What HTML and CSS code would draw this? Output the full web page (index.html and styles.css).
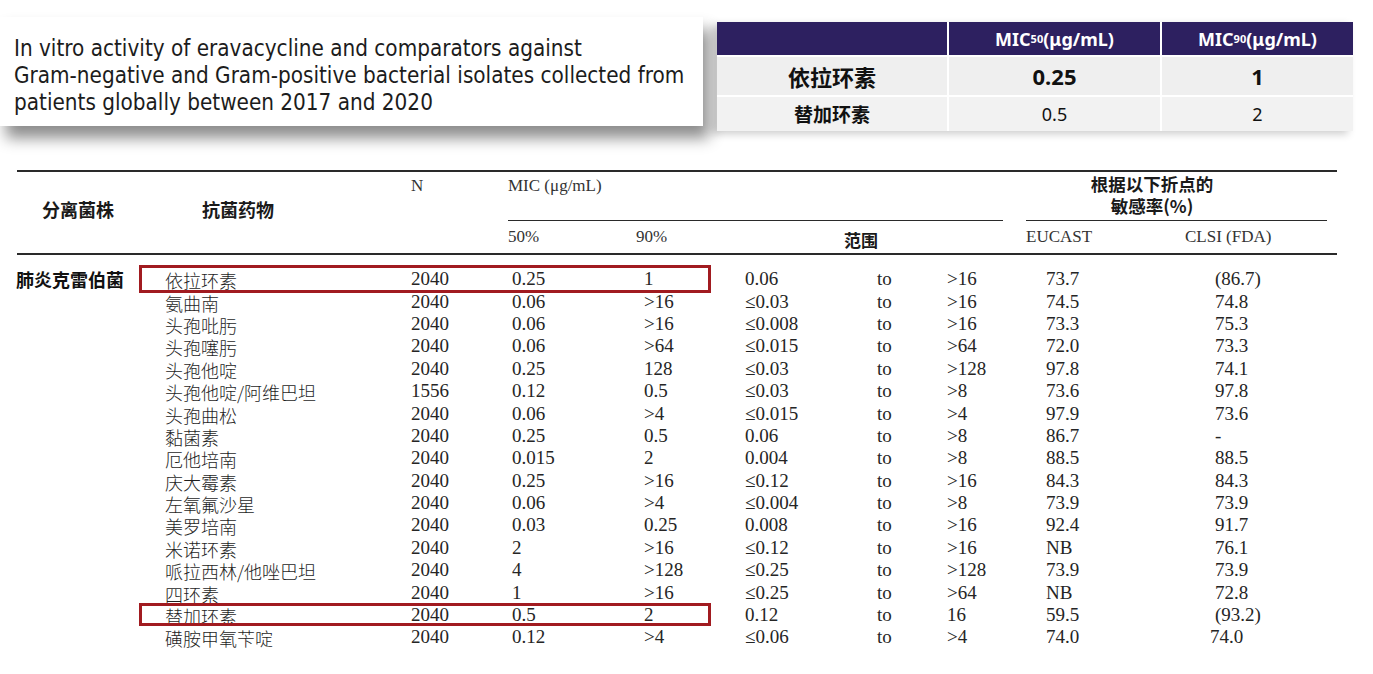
FILE: index.html
```html
<!DOCTYPE html>
<html lang="zh-CN">
<head>
<meta charset="utf-8">
<title>Eravacycline MIC</title>
<link rel="stylesheet" href="styles.css">
</head>
<body>
<div class="top">
  <div class="card">
    <p class="card-text">In vitro activity of eravacycline and comparators against<br>Gram-negative and Gram-positive bacterial isolates collected from<br>patients globally between 2017 and 2020</p>
  </div>
  <div class="summary">
    <div class="s-head"></div>
    <div class="s-head">MIC<sub>50</sub> (μg/mL)</div>
    <div class="s-head">MIC<sub>90</sub>(μg/mL)</div>
    <div class="s-cell s-big s-name">依拉环素</div>
    <div class="s-cell s-big">0.25</div>
    <div class="s-cell s-big">1</div>
    <div class="s-cell s-small s-name">替加环素</div>
    <div class="s-cell s-small">0.5</div>
    <div class="s-cell s-small">2</div>
  </div>
</div>

<div class="main">
  <div class="thead">
    <div class="h-org">分离菌株</div>
    <div class="h-drug">抗菌药物</div>
    <div class="h-n">N</div>
    <div class="h-mic">MIC (μg/mL)</div>
    <div class="h-sens"><div>根据以下折点的</div><div>敏感率(%)</div></div>
    <div class="h-50">50%</div>
    <div class="h-90">90%</div>
    <div class="h-range">范围</div>
    <div class="h-eu">EUCAST</div>
    <div class="h-clsi">CLSI (FDA)</div>
  </div>
  <div class="tbody">
    <div class="row"><span class="org">肺炎克雷伯菌</span><span class="drug">依拉环素</span><span>2040</span><span class="c50">0.25</span><span class="c90">1</span><span>0.06</span><span>to</span><span>&gt;16</span><span class="eu">73.7</span><span class="cl">(86.7)</span><i class="mark mark-a"></i></div>
    <div class="row"><span class="org"></span><span class="drug">氨曲南</span><span>2040</span><span class="c50">0.06</span><span class="c90">&gt;16</span><span>≤0.03</span><span>to</span><span>&gt;16</span><span class="eu">74.5</span><span class="cl">74.8</span></div>
    <div class="row"><span class="org"></span><span class="drug">头孢吡肟</span><span>2040</span><span class="c50">0.06</span><span class="c90">&gt;16</span><span>≤0.008</span><span>to</span><span>&gt;16</span><span class="eu">73.3</span><span class="cl">75.3</span></div>
    <div class="row"><span class="org"></span><span class="drug">头孢噻肟</span><span>2040</span><span class="c50">0.06</span><span class="c90">&gt;64</span><span>≤0.015</span><span>to</span><span>&gt;64</span><span class="eu">72.0</span><span class="cl">73.3</span></div>
    <div class="row"><span class="org"></span><span class="drug">头孢他啶</span><span>2040</span><span class="c50">0.25</span><span class="c90">128</span><span>≤0.03</span><span>to</span><span>&gt;128</span><span class="eu">97.8</span><span class="cl">74.1</span></div>
    <div class="row"><span class="org"></span><span class="drug">头孢他啶/阿维巴坦</span><span>1556</span><span class="c50">0.12</span><span class="c90">0.5</span><span>≤0.03</span><span>to</span><span>&gt;8</span><span class="eu">73.6</span><span class="cl">97.8</span></div>
    <div class="row"><span class="org"></span><span class="drug">头孢曲松</span><span>2040</span><span class="c50">0.06</span><span class="c90">&gt;4</span><span>≤0.015</span><span>to</span><span>&gt;4</span><span class="eu">97.9</span><span class="cl">73.6</span></div>
    <div class="row"><span class="org"></span><span class="drug">黏菌素</span><span>2040</span><span class="c50">0.25</span><span class="c90">0.5</span><span>0.06</span><span>to</span><span>&gt;8</span><span class="eu">86.7</span><span class="cl">-</span></div>
    <div class="row"><span class="org"></span><span class="drug">厄他培南</span><span>2040</span><span class="c50">0.015</span><span class="c90">2</span><span>0.004</span><span>to</span><span>&gt;8</span><span class="eu">88.5</span><span class="cl">88.5</span></div>
    <div class="row"><span class="org"></span><span class="drug">庆大霉素</span><span>2040</span><span class="c50">0.25</span><span class="c90">&gt;16</span><span>≤0.12</span><span>to</span><span>&gt;16</span><span class="eu">84.3</span><span class="cl">84.3</span></div>
    <div class="row"><span class="org"></span><span class="drug">左氧氟沙星</span><span>2040</span><span class="c50">0.06</span><span class="c90">&gt;4</span><span>≤0.004</span><span>to</span><span>&gt;8</span><span class="eu">73.9</span><span class="cl">73.9</span></div>
    <div class="row"><span class="org"></span><span class="drug">美罗培南</span><span>2040</span><span class="c50">0.03</span><span class="c90">0.25</span><span>0.008</span><span>to</span><span>&gt;16</span><span class="eu">92.4</span><span class="cl">91.7</span></div>
    <div class="row"><span class="org"></span><span class="drug">米诺环素</span><span>2040</span><span class="c50">2</span><span class="c90">&gt;16</span><span>≤0.12</span><span>to</span><span>&gt;16</span><span class="eu">NB</span><span class="cl">76.1</span></div>
    <div class="row"><span class="org"></span><span class="drug">哌拉西林/他唑巴坦</span><span>2040</span><span class="c50">4</span><span class="c90">&gt;128</span><span>≤0.25</span><span>to</span><span>&gt;128</span><span class="eu">73.9</span><span class="cl">73.9</span></div>
    <div class="row"><span class="org"></span><span class="drug">四环素</span><span>2040</span><span class="c50">1</span><span class="c90">&gt;16</span><span>≤0.25</span><span>to</span><span>&gt;64</span><span class="eu">NB</span><span class="cl">72.8</span></div>
    <div class="row"><span class="org"></span><span class="drug">替加环素</span><span>2040</span><span class="c50">0.5</span><span class="c90">2</span><span>0.12</span><span>to</span><span>16</span><span class="eu">59.5</span><span class="cl">(93.2)</span><i class="mark mark-b"></i></div>
    <div class="row"><span class="org"></span><span class="drug">磺胺甲氧苄啶</span><span>2040</span><span class="c50">0.12</span><span class="c90">&gt;4</span><span>≤0.06</span><span>to</span><span>&gt;4</span><span class="eu">74.0</span><span class="cl cl-last">74.0</span></div>
  </div>
</div>
</body>
</html>
```

FILE: styles.css
```css
* { box-sizing: border-box; }

body {
  margin: 0;
  background: #ffffff;
  color: #222222;
  font-family: "Liberation Serif", "Noto Sans CJK SC", serif;
}

.top {
  display: flex;
  align-items: flex-start;
  height: 170px;
}

.card {
  margin-top: 17px;
  width: 703px;
  height: 109px;
  background: #ffffff;
  padding: 18px 0 0 14px;
  box-shadow: 6px 12px 14px rgba(0, 0, 0, 0.45);
}

.card-text {
  margin: 0;
  font-family: "DejaVu Sans Condensed", "Liberation Sans Narrow", "Liberation Sans", sans-serif;
  font-size: 22.3px;
  line-height: 27px;
  color: #1c1c1c;
  white-space: nowrap;
}

.summary {
  margin: 22px 0 0 14px;
  display: grid;
  grid-template-columns: 230px 211px 191px;
  grid-template-rows: 33px 38px 34px;
  gap: 2px;
  background: #ffffff;
  box-shadow: -5px 3px 8px rgba(0, 0, 0, 0.2);
  font-family: "Noto Sans", "Noto Sans CJK SC", sans-serif;
}

.s-head {
  background: #2d2060;
  color: #ffffff;
  font-weight: 700;
  font-size: 18px;
  display: flex;
  align-items: center;
  justify-content: center;
  padding-top: 1px;
}

.s-head sub {
  font-size: 11px;
  vertical-align: -3px;
  line-height: 0;
}

.s-cell {
  background: #efefef;
  color: #111111;
  display: flex;
  align-items: center;
  justify-content: center;
}

.s-big {
  font-size: 22px;
  font-weight: 700;
}

.s-small {
  font-size: 18px;
  font-weight: 400;
  background: #f2f2f2;
}

.s-small.s-name {
  font-weight: 700;
  font-size: 19px;
}

.main {
  margin-left: 17px;
  width: 1320px;
}

.thead {
  display: grid;
  grid-template-columns: 122px 272px 97px 128px 109px 132px 70px 79px 159px 152px;
  grid-template-rows: 49px 32px;
  border-top: 2px solid #2a2a2a;
  border-bottom: 2px solid #2a2a2a;
  font-size: 17px;
  color: #333333;
}

.h-org, .h-drug, .h-sens, .h-range {
  font-family: "Noto Sans CJK SC", sans-serif;
  font-weight: 700;
  color: #1a1a1a;
}

.h-org {
  grid-column: 1;
  grid-row: 1 / 3;
  align-self: center;
  padding: 0 0 8px 25px;
  font-size: 18px;
}

.h-drug {
  grid-column: 2;
  grid-row: 1 / 3;
  align-self: center;
  padding: 0 0 8px 63px;
  font-size: 18px;
}

.h-n {
  grid-column: 3;
  grid-row: 1;
  padding-top: 4px;
}

.h-mic {
  grid-column: 4 / 9;
  grid-row: 1;
  padding-top: 4px;
  margin-right: 23px;
  border-bottom: 1.5px solid #2a2a2a;
}

.h-sens {
  grid-column: 9 / 11;
  grid-row: 1;
  margin-right: 10px;
  padding: 2px 49px 0 0;
  border-bottom: 1.5px solid #2a2a2a;
  display: flex;
  flex-direction: column;
  align-items: center;
  gap: 2px;
  font-size: 17.5px;
  line-height: 20px;
}

.h-50, .h-90, .h-eu, .h-clsi, .h-range {
  grid-row: 2;
  align-self: center;
}

.h-50 { grid-column: 4; }
.h-90 { grid-column: 5; }
.h-range {
  grid-column: 6 / 9;
  padding: 4px 0 0 99px;
  font-size: 17px;
}
.h-eu { grid-column: 9; }
.h-clsi { grid-column: 10; }

.tbody {
  padding-top: 13px;
}

.row {
  position: relative;
  display: grid;
  grid-template-columns: 122px 272px 97px 128px 109px 132px 70px 79px 159px 152px;
  height: 22.4px;
  align-items: center;
  font-size: 19px;
  line-height: 22px;
  color: #252525;
}

.org {
  font-family: "Noto Sans CJK SC", sans-serif;
  font-weight: 700;
  font-size: 18px;
  color: #111111;
  margin-left: -1px;
}

.drug {
  padding: 2px 0 0 26px;
  font-family: "Noto Sans CJK SC", sans-serif;
  font-weight: 300;
  font-size: 18px;
  line-height: 20px;
  color: #1e1e1e;
}

.c50 { padding-left: 4px; }
.c90 { padding-left: 8px; }
.eu { padding-left: 20px; }
.cl { padding-left: 30px; }
.cl-last { padding-left: 25px; }

.mark {
  position: absolute;
  left: 122px;
  width: 572px;
  border: 3px solid #a11b20;
}

.mark-a {
  top: -3px;
  height: 28px;
}

.mark-b {
  top: -1px;
  height: 23px;
}
```
